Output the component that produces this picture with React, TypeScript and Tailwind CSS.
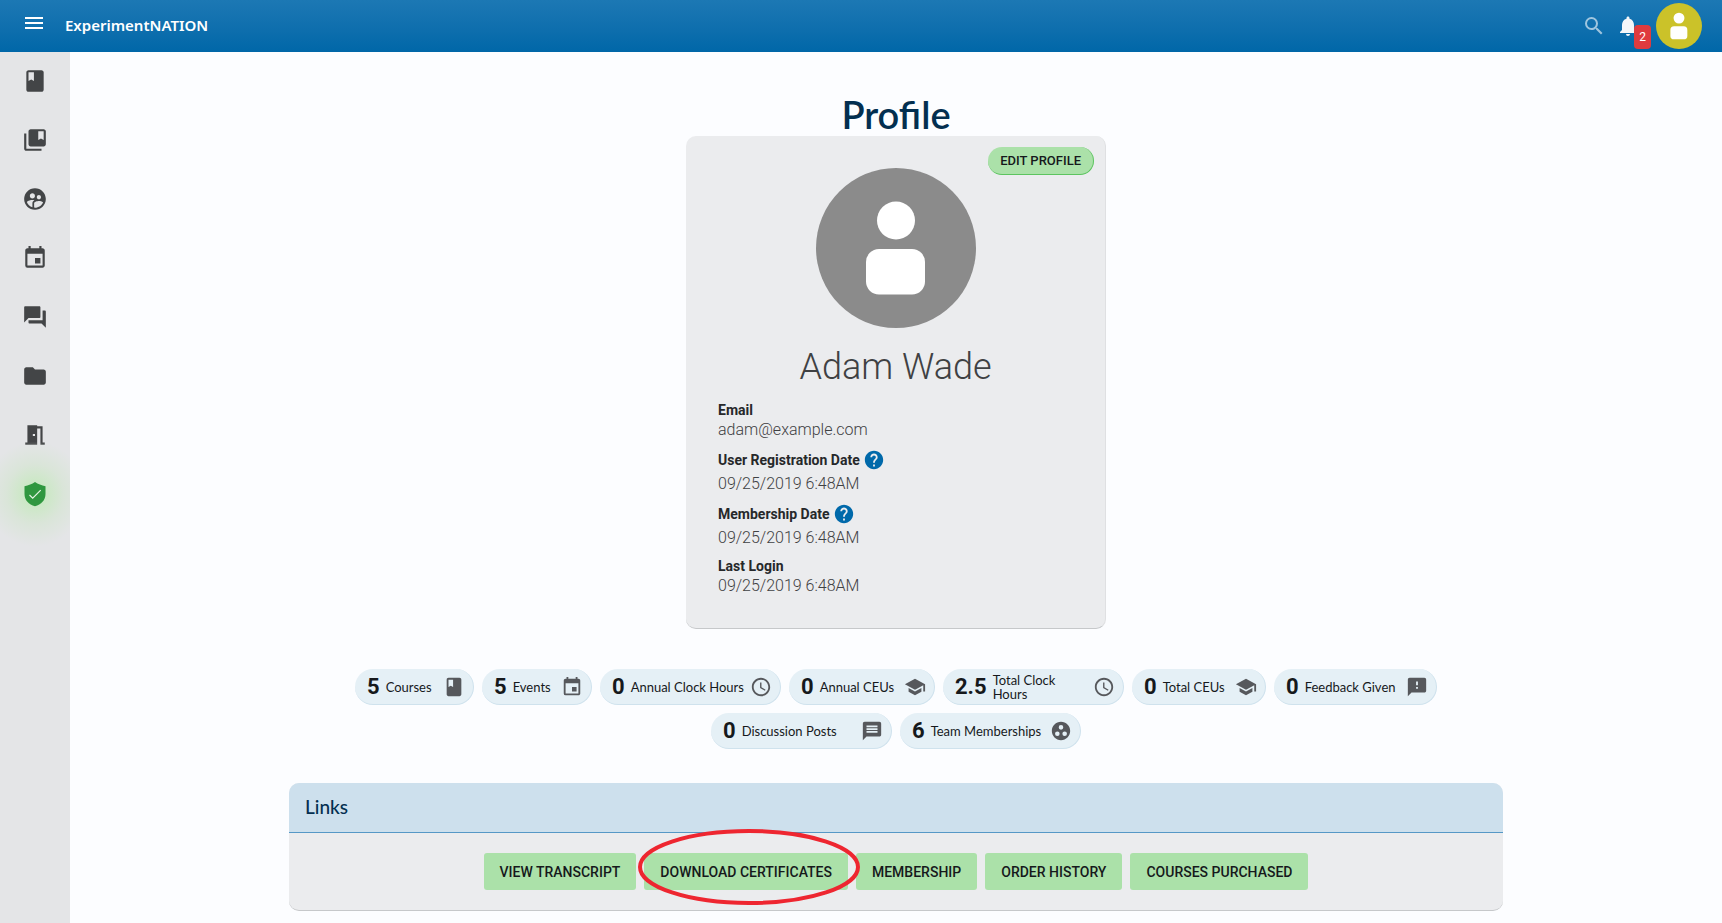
import type { ComponentType } from 'react';
import {
  MdClass,
  MdCollectionsBookmark,
  MdEvent,
  MdFeedback,
  MdFolder,
  MdGroupWork,
  MdHelp,
  MdMeetingRoom,
  MdMenu,
  MdMessage,
  MdNotifications,
  MdQuestionAnswer,
  MdSchedule,
  MdSchool,
  MdSearch,
  MdSupervisedUserCircle,
} from 'react-icons/md';

type Icon = ComponentType<{ size?: number; className?: string }>;

const navItems: { label: string; icon: Icon }[] = [
  { label: 'Courses', icon: MdClass },
  { label: 'Collections', icon: MdCollectionsBookmark },
  { label: 'Communities', icon: MdSupervisedUserCircle },
  { label: 'Events', icon: MdEvent },
  { label: 'Discussions', icon: MdQuestionAnswer },
  { label: 'Files', icon: MdFolder },
  { label: 'Rooms', icon: MdMeetingRoom },
];

const stats: { value: string; label: string; icon: Icon; width: string }[] = [
  { value: '5', label: 'Courses', icon: MdClass, width: 'w-[119px]' },
  { value: '5', label: 'Events', icon: MdEvent, width: 'w-[110px]' },
  { value: '0', label: 'Annual Clock Hours', icon: MdSchedule, width: 'w-[181px]' },
  { value: '0', label: 'Annual CEUs', icon: MdSchool, width: 'w-[146px]' },
  { value: '2.5', label: 'Total Clock Hours', icon: MdSchedule, width: 'w-[181px]' },
  { value: '0', label: 'Total CEUs', icon: MdSchool, width: 'w-[134px]' },
  { value: '0', label: 'Feedback Given', icon: MdFeedback, width: 'w-[163px]' },
  { value: '0', label: 'Discussion Posts', icon: MdMessage, width: 'w-[181px]' },
  { value: '6', label: 'Team Memberships', icon: MdGroupWork, width: 'w-[181px]' },
];

const links = [
  'View Transcript',
  'Download Certificates',
  'Membership',
  'Order History',
  'Courses Purchased',
];

function Person({ className }: { className: string }) {
  return (
    <svg viewBox="0 0 160 160" className={className} aria-hidden="true">
      <circle cx="80" cy="80" r="80" fill="currentColor" />
      <circle cx="80" cy="52.500" r="19" fill="#fff" />
      <rect x="50" y="81" width="59" height="45.500" rx="13" fill="#fff" />
    </svg>
  );
}

function Shield() {
  return (
    <svg viewBox="0 0 22 26" className="h-[26px] w-[22px]" aria-hidden="true">
      <path
        d="M11 1c3 2 6.500 3.600 10.500 4.200V13c0 6-4.300 10.800-10.500 12.200C4.800 23.800.5 19 .5 13V5.200C4.500 4.600 8 3 11 1z"
        fill="#2f973f"
      />
      <path d="M5.500 14l3.200 3.200 8-8" fill="none" stroke="#e6f4e4" strokeWidth="1.200" />
    </svg>
  );
}

function Field({ label, value, help }: { label: string; value: string; help?: boolean }) {
  return (
    <div>
      <dt
        className={
          help
            ? 'flex h-6 items-center gap-[3px] text-sm font-bold text-[#26282a]'
            : 'flex h-5 items-center text-sm font-bold text-[#26282a]'
        }
      >
        {label}
        {help && (
          <button type="button" aria-label={'About ' + label} className="text-[#0069aa]">
            <MdHelp size={22} />
          </button>
        )}
      </dt>
      <dd className={help ? 'pt-0.5 text-base leading-5 font-light' : 'text-base leading-5 font-light'}>
        {value}
      </dd>
    </div>
  );
}

export default function App() {
  return (
    <div className="flex min-h-screen flex-col bg-[#fcfdff] font-['Roboto',sans-serif] text-[#3f4143]">
      <header className="flex h-[52px] items-center bg-linear-to-b from-[#1c78b4] to-[#0067a8] pr-5 pl-[22px] text-white">
        <button type="button" aria-label="Menu" className="pb-1.5">
          <MdMenu size={24} />
        </button>
        <a
          href="#"
          className="ml-[19px] pb-0.5 font-['Noto_Sans','Open_Sans',sans-serif] text-[15px] leading-6 font-semibold"
        >
          ExperimentNATION
        </a>
        <div className="ml-auto flex items-center">
          <button type="button" aria-label="Search" className="text-white/60">
            <MdSearch size={24} />
          </button>
          <button type="button" aria-label="Notifications" className="relative ml-2.5 text-[#f4f6f9]">
            <MdNotifications size={24} />
            <span className="absolute top-[11px] left-[18px] flex h-6 w-[17px] items-center justify-center rounded bg-[#df3b3e] text-xs text-white">
              2
            </span>
          </button>
          <button type="button" aria-label="Account" className="ml-4">
            <Person className="size-[46px] text-[#cbc229]" />
          </button>
        </div>
      </header>

      <div className="flex flex-1">
        <nav className="flex w-[70px] shrink-0 flex-col items-center gap-[33px] overflow-hidden bg-[#e4e5e7] pt-4 text-[#434547]">
          {navItems.map(({ label, icon: NavIcon }) => (
            <a key={label} href="#" aria-label={label}>
              <NavIcon size={26} />
            </a>
          ))}
          <a
            href="#"
            aria-label="Security"
            className="-m-10 bg-radial from-[#cbe8c5] from-15% via-[#dae5d9] via-40% to-transparent to-70% p-10"
          >
            <Shield />
          </a>
        </nav>

        <main className="flex flex-1 flex-col items-center px-6 pt-10 pb-3">
          <h1 className="font-['Lato',sans-serif] text-[38px] leading-[44px] font-semibold text-[#032f50]">
            Profile
          </h1>

          <section className="relative flex w-[420px] flex-col items-center rounded-[10px] border-r border-b border-r-[#dfe0e2] border-b-[#c6c8ca] bg-[#ebecee] px-8 py-8">
            <button
              type="button"
              className="absolute top-[11px] right-[11px] h-7 rounded-full border-r border-b border-[#5cc45f] bg-[#abe1a9] px-3 text-[13px] font-medium text-[#16191c] uppercase"
            >
              Edit Profile
            </button>
            <Person className="size-40 text-[#8b8b8b]" />
            <h2 className="mt-[17px] text-4xl leading-[44px] font-light">Adam Wade</h2>
            <dl className="mt-[11px] flex w-full flex-col gap-2">
              <Field label="Email" value="adam@example.com" />
              <Field label="User Registration Date" value="09/25/2019 6:48AM" help />
              <Field label="Membership Date" value="09/25/2019 6:48AM" help />
              <Field label="Last Login" value="09/25/2019 6:48AM" />
            </dl>
          </section>

          <ul className="mt-10 flex w-full max-w-[1214px] flex-wrap justify-center gap-2">
            {stats.map(({ value, label, icon: StatIcon, width }) => (
              <li
                key={label}
                className={
                  width +
                  ' flex h-9 items-center rounded-full border-r border-b border-[#cfe2ed] bg-[#e5f0f6] pr-2 pl-3'
                }
              >
                <span className="text-[22px] leading-6 font-bold text-[#16191c]">{value}</span>
                <span className="ml-1.5 flex-1 font-['Lato',sans-serif] text-[13px] leading-[14px] text-[#16191c]">
                  {label}
                </span>
                <StatIcon size={22} className="shrink-0 text-[#56585c]" />
              </li>
            ))}
          </ul>

          <section className="mt-[34px] w-full max-w-[1214px] rounded-[10px] border-b border-[#c6c8ca] bg-[#ebecee]">
            <h2 className="flex h-[50px] items-center rounded-t-[10px] border-b border-[#5698c6] bg-[#cde0ed] px-4 font-['Lato',sans-serif] text-[19px] font-medium text-[#032f50]">
              Links
            </h2>
            <div className="flex flex-wrap justify-center gap-2 px-4 py-5">
              {links.map((label) => (
                <div key={label} className="relative">
                  <a
                    href="#"
                    className="flex h-[37px] items-center rounded-[3px] bg-[#abe1a9] px-4 text-sm font-medium text-[#16191c] uppercase"
                  >
                    {label}
                  </a>
                  {label === 'Download Certificates' && (
                    <svg
                      viewBox="0 0 222 76"
                      preserveAspectRatio="none"
                      className="pointer-events-none absolute -top-6 -left-1.5 z-10 h-[76px] w-[222px] max-w-none"
                      aria-hidden="true"
                    >
                      <ellipse cx="111" cy="38" rx="109" ry="36" fill="none" stroke="#ee2630" strokeWidth="4" />
                    </svg>
                  )}
                </div>
              ))}
            </div>
          </section>
        </main>
      </div>
    </div>
  );
}
